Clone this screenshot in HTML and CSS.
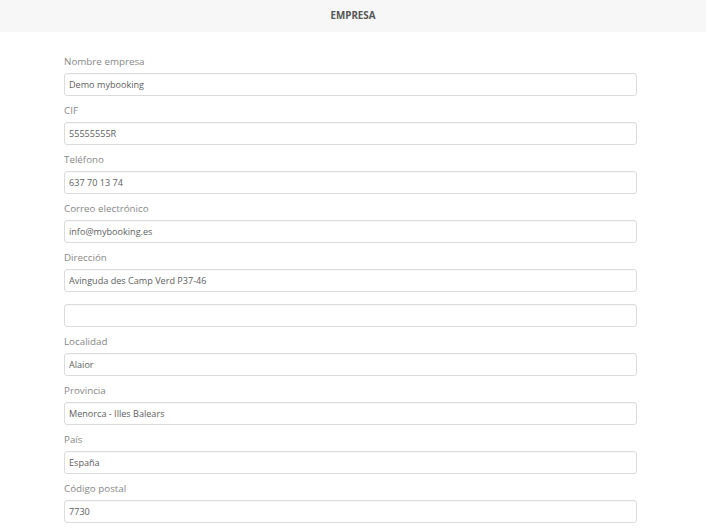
FILE: index.html
```html
<!DOCTYPE html>
<html lang="es">
<head>
    <meta charset="UTF-8">
    <meta name="viewport" content="width=device-width, initial-scale=1.0">
    <title>Empresa</title>
    <link rel="stylesheet" href="styles.css">
</head>
<body>
    <!-- Cabecera -->
    <div class="header">EMPRESA</div>

    <!-- Formulario empresa -->
    <form class="company-form">
        <div class="field">
            <label>Nombre empresa</label>
            <input type="text" value="Demo mybooking">
        </div>
        <div class="field">
            <label>CIF</label>
            <input type="text" value="55555555R">
        </div>
        <div class="field">
            <label>Teléfono</label>
            <input type="text" value="637 70 13 74">
        </div>
        <div class="field">
            <label>Correo electrónico</label>
            <input type="email" value="info@mybooking.es">
        </div>
        <div class="field">
            <label>Dirección</label>
            <input type="text" value="Avinguda des Camp Verd P37-46">
        </div>
        <div class="field field-extra">
            <input type="text" value="">
        </div>
        <div class="field">
            <label>Localidad</label>
            <input type="text" value="Alaior">
        </div>
        <div class="field">
            <label>Provincia</label>
            <input type="text" value="Menorca - Illes Balears">
        </div>
        <div class="field">
            <label>País</label>
            <input type="text" value="España">
        </div>
        <div class="field">
            <label>Código postal</label>
            <input type="text" value="7730">
        </div>
    </form>
</body>
</html>
```

FILE: styles.css
```css
/* CSS */
body { font-family: "Open Sans", Arial, sans-serif; background-color: #fff; margin: 0; padding: 0; }

.header {
    height: 32px;
    line-height: 32px;
    background-color: #f7f7f7;
    text-align: center;
    font-size: 9.8px;
    font-weight: bold;
    color: #555;
}

.company-form {
    width: 573px;
    margin: 0 0 0 64px;
    padding-top: 22px;
}

.field { margin-bottom: 7px; }
.field label {
    display: block;
    font-size: 9.8px;
    line-height: 14px;
    padding-top: 1px;
    margin-bottom: 4px;
    color: #888;
}
.field-extra { padding-top: 5px; }

.field input {
    display: block;
    box-sizing: border-box;
    width: 100%;
    height: 23px;
    padding: 0 4px;
    border: 1px solid #dcdcdc;
    border-radius: 3px;
    box-shadow: inset 0 1px 1px rgba(0, 0, 0, 0.03);
    font-family: "Open Sans", Arial, sans-serif;
    font-size: 9.1px;
    color: #606060;
    background-color: #fff;
    outline: none;
}
```
